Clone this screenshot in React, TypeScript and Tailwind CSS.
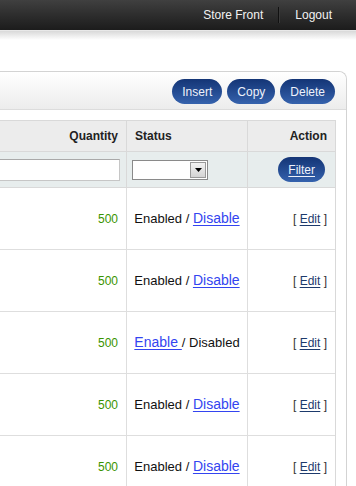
import React from 'react';

type Row = { enabled: boolean };

const rows: Row[] = [
  { enabled: true },
  { enabled: true },
  { enabled: false },
  { enabled: true },
  { enabled: true },
];

function BlueButton({ label, underline }: { label: string; underline?: boolean }) {
  return (
    <button
      className={`h-[25px] rounded-full bg-gradient-to-b from-[#143576] to-[#3562ad] px-[10px] text-[12px] leading-none text-[#eef2fb] ${
        underline ? 'underline underline-offset-2' : ''
      }`}
    >
      {label}
    </button>
  );
}

export default function App() {
  return (
    <div className="h-[486px] w-[356px] overflow-hidden bg-white font-['Liberation_Sans',Arial,sans-serif] text-[12px] text-[#111]">
      {/* top bar */}
      <div className="flex h-[31px] items-center justify-end border-b border-[#e8e8e8] bg-gradient-to-b from-[#404040] to-[#1c1c1c] pr-[24px] text-[12px] text-[#f2f2f2]">
        <span>Store Front</span>
        <span className="mx-[15px] h-[16px] w-[2px] border-l border-r border-l-[#111] border-r-[#3a3a3a]" />
        <span>Logout</span>
      </div>
      <div className="h-[9px] bg-gradient-to-b from-[#d9d9d9] to-white" />

      {/* panel */}
      <div className="mt-[31px] -ml-[40px] mr-[9px] rounded-tr-[8px] border border-b-0 border-[#d3d3d3]">
        <div className="flex h-[38px] items-start justify-end gap-[5px] rounded-tr-[8px] border-b border-[#dcdcdc] bg-gradient-to-b from-white to-[#ececec] pr-[11px] pt-[7px]">
          <BlueButton label="Insert" />
          <BlueButton label="Copy" />
          <BlueButton label="Delete" />
        </div>

        <div className="pr-[10px] pt-[10px]">
          <div className="border-r border-t border-[#d9d9d9]">
            {/* header */}
            <div className="grid h-[31px] grid-cols-[1fr_121px_88px] border-b border-[#d9d9d9] bg-[#ececec] font-bold text-[#222]">
              <div className="flex items-center justify-end pr-[8px]">Quantity</div>
              <div className="flex items-center border-l border-[#d9d9d9] pl-[8px]">Status</div>
              <div className="flex items-center justify-end border-l border-[#d9d9d9] pr-[8px]">Action</div>
            </div>

            {/* filter row */}
            <div className="grid h-[36px] grid-cols-[1fr_121px_88px] border-b border-[#d9d9d9] bg-[#e7eded]">
              <div className="flex items-center pr-[6px]">
                <div className="h-[22px] w-full border border-[#c6c6c6] border-t-[#a9a9a9] bg-white" />
              </div>
              <div className="flex items-center border-l border-[#d9d9d9] pl-[5px]">
                <div className="flex h-[20px] w-[76px] items-center justify-end border border-[#8a8a8a] bg-white pr-[1px]">
                  <div className="flex h-[16px] w-[16px] items-center justify-center border border-[#9a9a9a] bg-gradient-to-b from-[#f2f2f2] to-[#d4d4d4]">
                    <svg width="7" height="4" viewBox="0 0 7 4">
                      <path d="M0 0h7L3.5 4z" fill="#000" />
                    </svg>
                  </div>
                </div>
              </div>
              <div className="flex items-center justify-end border-l border-[#d9d9d9] pr-[10px]">
                <BlueButton label="Filter" underline />
              </div>
            </div>

            {/* data rows */}
            {rows.map((r, i) => (
              <div
                key={i}
                className="grid h-[62px] grid-cols-[1fr_121px_88px] border-b border-[#dedede] bg-white"
              >
                <div className="flex items-center justify-end pr-[8px] text-[#3a9400]">500</div>
                <div className="flex items-center justify-center border-l border-[#dedede] text-[13px]">
                  {r.enabled ? (
                    <span>
                      Enabled /{' '}
                      <a className="text-[14px] text-[#3344f0] underline underline-offset-2">Disable</a>
                    </span>
                  ) : (
                    <span>
                      <a className="text-[14px] text-[#3344f0] underline underline-offset-2">Enable </a> / Disabled
                    </span>
                  )}
                </div>
                <div className="flex items-center justify-end border-l border-[#dedede] pr-[8px] text-[#333]">
                  [&nbsp;<a className="text-[#1d3a6c] underline underline-offset-2">Edit</a>&nbsp;]
                </div>
              </div>
            ))}
          </div>
        </div>
      </div>
    </div>
  );
}
